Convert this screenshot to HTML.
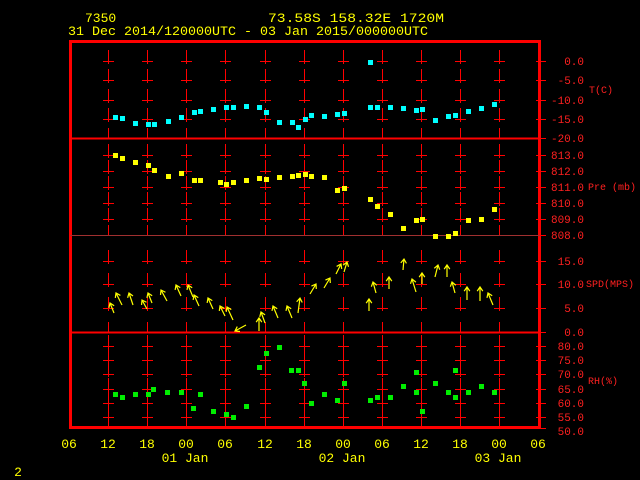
<!DOCTYPE html>
<html><head><meta charset="utf-8"><style>
html,body{margin:0;padding:0;background:#000;width:640px;height:480px;overflow:hidden}
svg{display:block}
text{font-family:"Liberation Mono",monospace}
</style></head><body>
<svg id="s" width="640" height="480" viewBox="0 0 640 480" xmlns="http://www.w3.org/2000/svg">
<g fill="#ffff00" font-size="13">
<text x="85" y="22">7350</text>
<text x="268" y="22" textLength="176" lengthAdjust="spacingAndGlyphs">73.58S  158.32E  1720M</text>
<text x="68" y="35" textLength="360" lengthAdjust="spacingAndGlyphs">31 Dec 2014/120000UTC - 03 Jan 2015/000000UTC</text>
</g>
<g id="grid" shape-rendering="crispEdges"></g>
<g fill="none" stroke="#ff0000" shape-rendering="crispEdges">
<rect x="70.5" y="41.5" width="469" height="386" stroke-width="3"/>
<line x1="70" y1="138.5" x2="540" y2="138.5" stroke-width="2"/>
<line x1="70" y1="235.5" x2="540" y2="235.5" stroke-width="1" stroke="#a03030"/>
<line x1="70" y1="332.5" x2="540" y2="332.5" stroke-width="2"/>
</g>
<g fill="#ff2020" font-size="11" text-anchor="end">
<text x="584" y="65">0.0</text><text x="584" y="84">-5.0</text><text x="584" y="104">-10.0</text><text x="584" y="123">-15.0</text><text x="584" y="142">-20.0</text>
<text x="584" y="159">813.0</text><text x="584" y="175">812.0</text><text x="584" y="191">811.0</text><text x="584" y="207">810.0</text><text x="584" y="223">809.0</text><text x="584" y="239">808.0</text>
<text x="584" y="265">15.0</text><text x="584" y="288">10.0</text><text x="584" y="312">5.0</text><text x="584" y="336">0.0</text>
<text x="584" y="350">80.0</text><text x="584" y="364">75.0</text><text x="584" y="378">70.0</text><text x="584" y="393">65.0</text><text x="584" y="407">60.0</text><text x="584" y="421">55.0</text><text x="584" y="435">50.0</text>
</g>
<g fill="#ff2020" font-size="10">
<text x="589" y="93">T(C)</text>
<text x="588" y="190">Pre (mb)</text>
<text x="586" y="287">SPD(MPS)</text>
<text x="588" y="384">RH(%)</text>
</g>
<g fill="#ffff00" font-size="13" text-anchor="middle">
<text x="69" y="448">06</text><text x="108" y="448">12</text><text x="147" y="448">18</text><text x="186" y="448">00</text><text x="225" y="448">06</text><text x="265" y="448">12</text><text x="304" y="448">18</text><text x="343" y="448">00</text><text x="382" y="448">06</text><text x="421" y="448">12</text><text x="460" y="448">18</text><text x="499" y="448">00</text><text x="538" y="448">06</text>
<text x="185" y="462">01 Jan</text><text x="342" y="462">02 Jan</text><text x="498" y="462">03 Jan</text>
<text x="18" y="476">2</text>
</g>
<g id="pts"></g>
</svg>
<script>
var NS="http://www.w3.org/2000/svg";
function el(p,t,a){var e=document.createElementNS(NS,t);for(var k in a)e.setAttribute(k,a[k]);p.appendChild(e);return e;}
var g=document.getElementById('grid');
var cols=[108,147,186,225,265,304,343,382,421,460,499];
var ticks=[61,80,100,119,155,171,187,203,219,261,284,308,346,360,374,389,403,417];
cols.forEach(function(x){
 ticks.forEach(function(y){
  el(g,'line',{x1:x+0.5,y1:y-11,x2:x+0.5,y2:y+3,stroke:'#ff0000','stroke-width':1});
  el(g,'line',{x1:x-5,y1:y+0.5,x2:x+6,y2:y+0.5,stroke:'#ff0000','stroke-width':1});
 });
 [138,235,332,428].forEach(function(y){el(g,'line',{x1:x+0.5,y1:y-10,x2:x+0.5,y2:y,stroke:'#ff0000','stroke-width':1});});
});
ticks.concat([138,235,332,428]).forEach(function(y){el(g,'line',{x1:536,y1:y+0.5,x2:546,y2:y+0.5,stroke:'#ff0000','stroke-width':1});});
var p=document.getElementById('pts');
function sq(list,c){list.forEach(function(q){el(p,'rect',{x:q[0]-2,y:q[1]-2,width:5,height:5,fill:c});});}
sq([[115,117],[122,118],[135,123],[148,124],[154,124],[168,121],[181,117],[194,112],[200,111],[213,109],[226,107],[233,107],[246,106],[259,107],[266,112],[279,122],[292,122],[298,127],[305,119],[311,115],[324,116],[337,114],[344,113],[370,62],[370,107],[377,107],[390,107],[403,108],[416,110],[422,109],[435,120],[448,116],[455,115],[468,111],[481,108],[494,104]],'#00ffff');
sq([[115,155],[122,158],[135,162],[148,165],[154,170],[168,176],[181,173],[194,180],[200,180],[220,182],[226,184],[233,182],[246,180],[259,178],[266,179],[279,177],[292,176],[298,175],[305,174],[311,176],[324,177],[337,190],[344,188],[370,199],[377,206],[390,214],[403,228],[416,220],[422,219],[435,236],[448,236],[455,233],[468,220],[481,219],[494,209]],'#ffff00');
sq([[115,394],[122,397],[135,394],[148,394],[153,389],[167,392],[181,392],[193,408],[200,394],[213,411],[226,414],[233,417],[246,406],[259,367],[266,353],[279,347],[291,370],[298,370],[304,383],[311,403],[324,394],[337,400],[344,383],[370,400],[377,397],[390,397],[403,386],[416,372],[416,392],[422,411],[435,383],[448,392],[455,370],[455,397],[468,392],[481,386],[494,392]],'#00ee00');
var ar=[[110,303,114,313],[116,293,122,305],[129,293,133,305],[142,300,147,309],[148,293,152,303],[161,290,167,301],[176,285,181,296],[188,285,193,297],[194,295,199,306],[208,298,213,309],[220,306,225,316],[227,307,233,320],[235,331,246,325],[259,318,259,331],[261,312,265,323],[273,306,278,318],[287,306,292,318],[300,298,298,313],[316,284,310,294],[330,278,324,288],[341,264,336,274],[347,262,344,272],[369,299,369,311],[373,282,376,293],[389,277,389,289],[404,259,403,270],[412,279,416,292],[422,273,422,284],[438,265,435,277],[447,265,447,277],[452,282,455,293],[467,287,467,300],[480,287,480,301],[488,293,493,305]];
ar.forEach(function(a){
 var dx=a[2]-a[0],dy=a[3]-a[1],L=Math.sqrt(dx*dx+dy*dy);dx/=L;dy/=L;
 var h=5,c=Math.cos(0.6),s=Math.sin(0.6);
 var h1=[a[0]+h*(dx*c-dy*s),a[1]+h*(dx*s+dy*c)],h2=[a[0]+h*(dx*c+dy*s),a[1]+h*(-dx*s+dy*c)];
 el(p,'path',{d:'M'+a[2]+' '+a[3]+'L'+a[0]+' '+a[1]+'M'+h1[0]+' '+h1[1]+'L'+a[0]+' '+a[1]+'L'+h2[0]+' '+h2[1],stroke:'#ffff00','stroke-width':1.2,fill:'none'});
});
</script>
</body></html>
